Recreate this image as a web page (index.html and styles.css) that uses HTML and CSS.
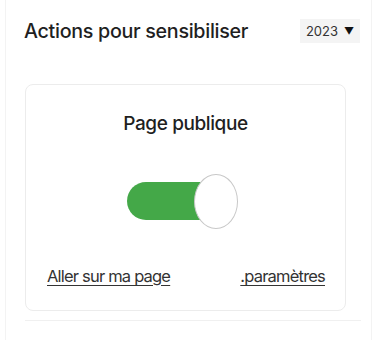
FILE: index.html
```html
<!DOCTYPE html>
<html lang="fr">
<head>
<meta charset="utf-8">
<link rel="stylesheet" href="styles.css">
</head>
<body>
<div class="panel">
  <div class="header">
    <h2 class="title">Actions pour sensibiliser</h2>
    <div class="year">2023 <span class="caret">▼</span></div>
  </div>
  <div class="card">
    <div class="card-title">Page publique</div>
    <div class="toggle-row">
      <div class="toggle"><span class="track"></span><span class="knob"></span></div>
    </div>
    <div class="links">
      <a class="link" href="#">Aller sur ma page</a>
      <a class="link" href="#">.paramètres</a>
    </div>
  </div>
  <div class="next"></div>
</div>
</body>
</html>
```
FILE: styles.css
```css
html, body { margin: 0; padding: 0; background: #fff; }
body { font-family: Inter, "Noto Sans", sans-serif; color: #222; }
.panel {
  margin-left: 5px;
  width: 367px;
  height: 340px;
  border-left: 1px solid #f3f3f3;
  border-right: 1px solid #f3f3f3;
  box-sizing: border-box;
  overflow: hidden;
}
.header {
  display: flex;
  justify-content: space-between;
  align-items: center;
  padding: 19px 11px 0 18px;
}
.title {
  margin: 0;
  font-size: 19.7px;
  font-weight: 500;
  letter-spacing: -0.3px;
  line-height: 24px;
  color: #1f1f1f;
}
.year {
  width: 60px;
  height: 24px;
  background: #f4f4f4;
  font-size: 13px;
  line-height: 24px;
  color: #333;
  display: flex;
  align-items: center;
  justify-content: center;
  gap: 6px;
}
.caret { font-size: 10px; color: #111; }
.card {
  margin: 41px 0 0 19px;
  width: 321px;
  height: 227px;
  border: 1px solid #ececec;
  border-radius: 8px;
  box-sizing: border-box;
  display: flex;
  flex-direction: column;
  align-items: center;
  padding-top: 28px;
}
.card-title {
  font-size: 19px;
  font-weight: 500;
  line-height: 22px;
  letter-spacing: -0.4px;
  color: #1f1f1f;
}
.toggle-row {
  margin-top: 39px;
  display: flex;
  justify-content: center;
  width: 100%;
  padding-right: 7px;
  box-sizing: border-box;
}
.toggle {
  position: relative;
  width: 111px;
  height: 55px;
}
.track {
  position: absolute;
  left: 0;
  top: 8px;
  width: 96px;
  height: 38px;
  background: #44a848;
  border-radius: 19px;
}
.knob {
  position: absolute;
  right: 0;
  top: 0;
  width: 44px;
  height: 55px;
  border-radius: 50%;
  background: #fff;
  border: 1.5px solid #c8c8c8;
  box-sizing: border-box;
}
.links {
  margin-top: 37px;
  width: 100%;
  box-sizing: border-box;
  padding: 0 20px 0 21px;
  display: flex;
  justify-content: space-between;
}
.link {
  font-size: 16.5px;
  color: #333;
  letter-spacing: -0.8px;
  text-decoration: underline;
  text-underline-offset: 3px;
}
.next {
  margin: 9px 0 0 19px;
  width: 336px;
  border-top: 1px solid #f0f0f0;
}
```
